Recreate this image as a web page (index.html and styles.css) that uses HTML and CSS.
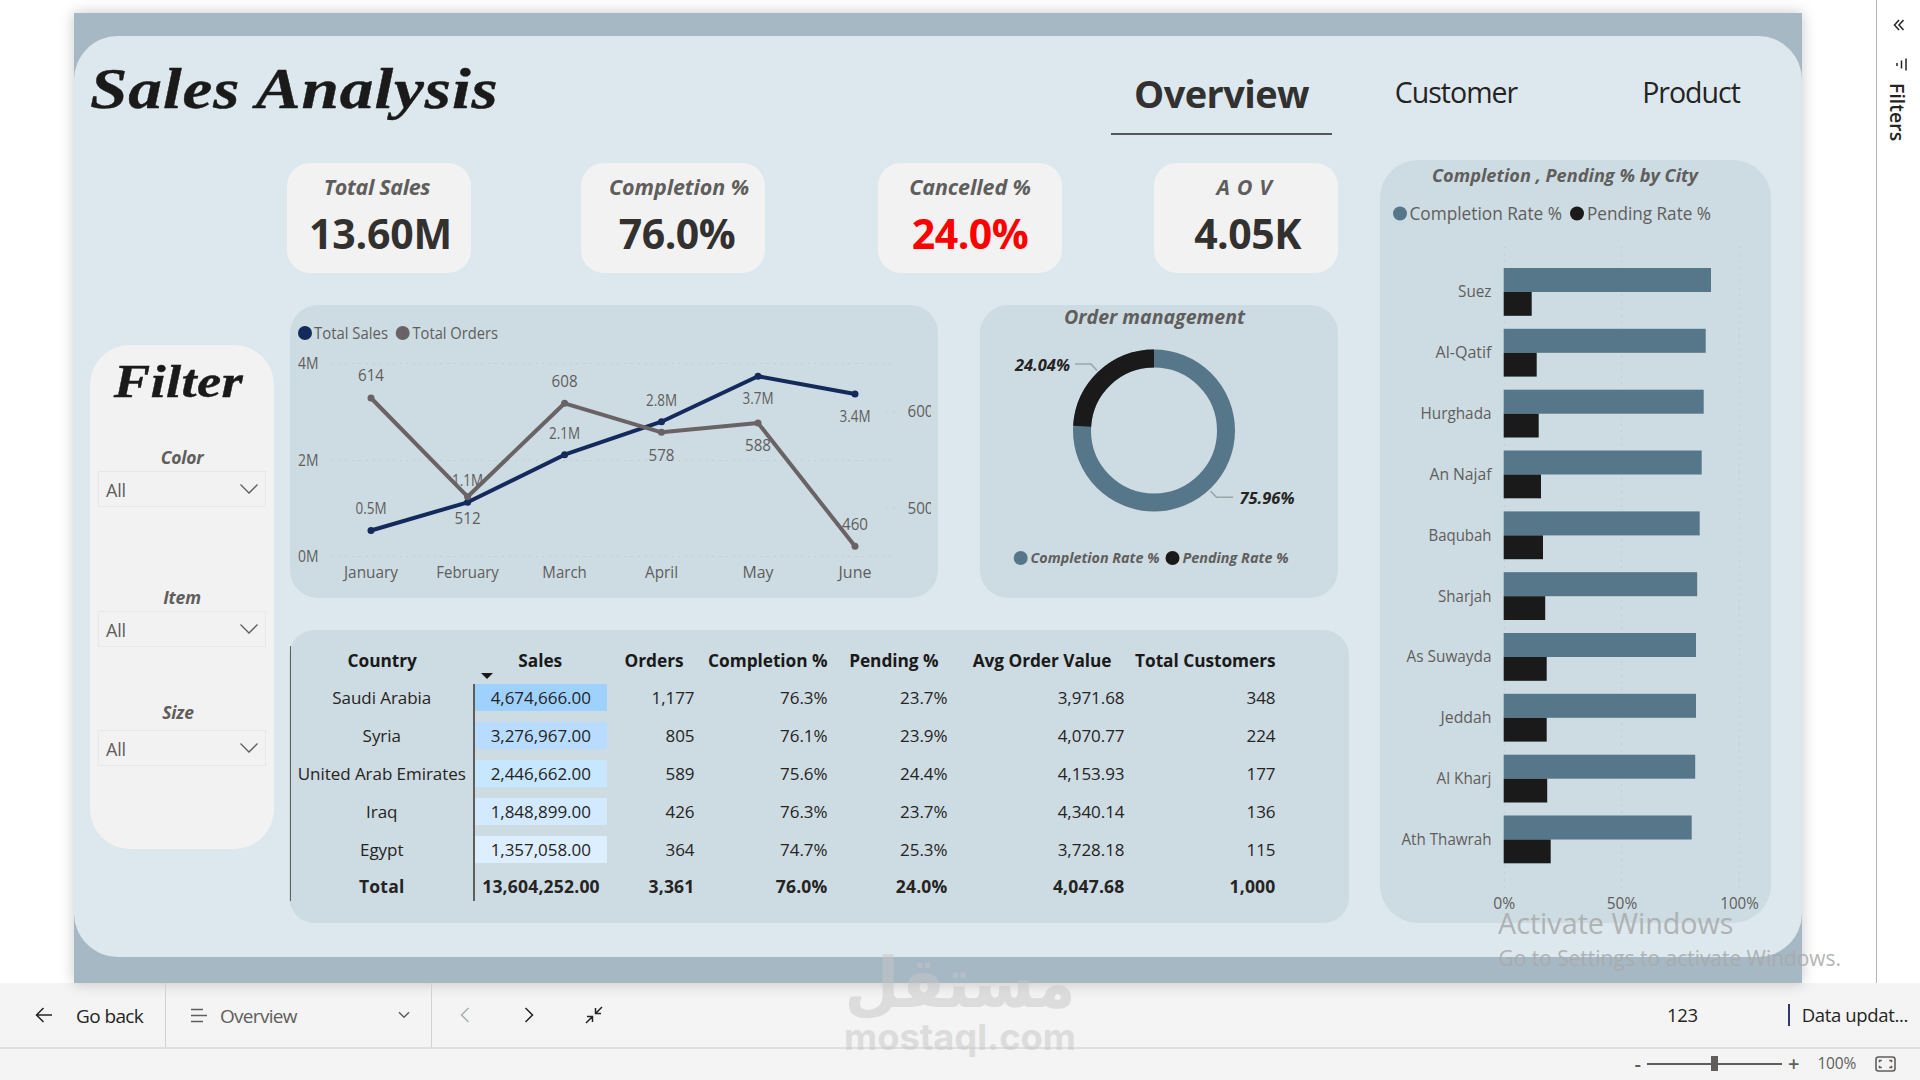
FILE: index.html
```html
<!DOCTYPE html>
<html lang="en">
<head>
<meta charset="utf-8">
<title>Sales Analysis</title>
<link rel="stylesheet" href="styles.css">
</head>
<body>
<div class="workspace">
  <main class="report">
    <div class="canvas">
      <header class="header">
        <h1 class="title">Sales Analysis</h1>
        <nav class="tabs">
          <a class="tab tab-active">Overview</a>
          <a class="tab tab-customer">Customer</a>
          <a class="tab tab-product">Product</a>
        </nav>
      </header>
      <div class="content">
        <aside class="filters">
          <h2 class="filters-title">Filter</h2>
          <div class="slicer slicer-color">
            <div class="slicer-label">Color</div>
            <div class="select"><span>All</span><svg width="20" height="12" viewBox="0 0 20 12"><path d="M1.5 1.5 10 10l8.500-8.500"/></svg></div>
          </div>
          <div class="slicer slicer-item">
            <div class="slicer-label">Item</div>
            <div class="select"><span>All</span><svg width="20" height="12" viewBox="0 0 20 12"><path d="M1.5 1.500 10 10l8.500-8.500"/></svg></div>
          </div>
          <div class="slicer slicer-size">
            <div class="slicer-label">Size</div>
            <div class="select"><span>All</span><svg width="20" height="12" viewBox="0 0 20 12"><path d="M1.500 1.500 10 10l8.500-8.500"/></svg></div>
          </div>
        </aside>

        <div class="middle">
          <section class="kpis">
            <div class="kpi kpi-sales"><div class="kpi-label">Total Sales</div><div class="kpi-value">13.60M</div></div>
            <div class="kpi kpi-completion"><div class="kpi-label">Completion %</div><div class="kpi-value">76.0%</div></div>
            <div class="kpi kpi-cancelled"><div class="kpi-label">Cancelled %</div><div class="kpi-value">24.0%</div></div>
            <div class="kpi kpi-aov"><div class="kpi-label">A O V</div><div class="kpi-value">4.05K</div></div>
          </section>

          <section class="charts">
            <div class="panel trend">
              <svg class="chart" width="648" height="293" viewBox="290 305 648 293">
                <circle cx="305" cy="333" r="7" fill="#152a5c"/>
                <text x="314" y="339" textLength="74" lengthAdjust="spacingAndGlyphs">Total Sales</text>
                <circle cx="402.700" cy="333" r="7" fill="#696366"/>
                <text x="412.500" y="339" textLength="85.500" lengthAdjust="spacingAndGlyphs">Total Orders</text>
                <g class="grid">
                  <path d="M332 363.500H896M332 460.500H896M332 556.500H896M886 412.500h9M886 508.500h9"/>
                </g>
                <text x="298" y="368.500" textLength="20.500" lengthAdjust="spacingAndGlyphs">4M</text>
                <text x="298" y="465.500" textLength="20.500" lengthAdjust="spacingAndGlyphs">2M</text>
                <text x="298" y="561.500" textLength="20.500" lengthAdjust="spacingAndGlyphs">0M</text>
                <svg x="900" y="395" width="31" height="140" viewBox="900 395 31 140">
                  <text x="907.500" y="417" textLength="26" lengthAdjust="spacingAndGlyphs">600</text>
                  <text x="907.500" y="514" textLength="26" lengthAdjust="spacingAndGlyphs">500</text>
                </svg>
                <g class="mid">
                  <text x="467.600" y="486" textLength="31" lengthAdjust="spacingAndGlyphs">1.1M</text>
                </g>
                <path class="line" stroke="#152a5c" d="M371 530.500 467.600 502.300 564.600 454.700 661.500 421.700 758 376.300 855 394"/>
                <g fill="#152a5c"><circle cx="371" cy="530.500" r="3.500"/><circle cx="467.600" cy="502.300" r="3.500"/><circle cx="564.600" cy="454.700" r="3.500"/><circle cx="661.500" cy="421.700" r="3.500"/><circle cx="758" cy="376.300" r="3.500"/><circle cx="855" cy="394" r="3.500"/></g>
                <path class="line" stroke="#696366" d="M371 398 467.600 496.700 564.600 403.300 661.500 432.300 758 423 855 546.300"/>
                <g fill="#696366"><circle cx="371" cy="398" r="3.500"/><circle cx="467.600" cy="496.700" r="3.500"/><circle cx="564.600" cy="403.300" r="3.500"/><circle cx="661.500" cy="432.300" r="3.500"/><circle cx="758" cy="423" r="3.500"/><circle cx="855" cy="546.300" r="3.500"/></g>
                <g class="mid">
                  <text x="371" y="381" textLength="26" lengthAdjust="spacingAndGlyphs">614</text>
                  <text x="371" y="514" textLength="31" lengthAdjust="spacingAndGlyphs">0.5M</text>
                  <text x="467.600" y="524" textLength="26" lengthAdjust="spacingAndGlyphs">512</text>
                  <text x="564.600" y="387" textLength="26" lengthAdjust="spacingAndGlyphs">608</text>
                  <text x="564.600" y="438.500" textLength="31" lengthAdjust="spacingAndGlyphs">2.1M</text>
                  <text x="661.500" y="405.500" textLength="31" lengthAdjust="spacingAndGlyphs">2.8M</text>
                  <text x="661.500" y="461" textLength="26" lengthAdjust="spacingAndGlyphs">578</text>
                  <text x="758" y="403.500" textLength="31" lengthAdjust="spacingAndGlyphs">3.7M</text>
                  <text x="758" y="451" textLength="26" lengthAdjust="spacingAndGlyphs">588</text>
                  <text x="855" y="421.500" textLength="31" lengthAdjust="spacingAndGlyphs">3.4M</text>
                  <text x="855" y="530" textLength="26" lengthAdjust="spacingAndGlyphs">460</text>
                  <text x="371" y="578" textLength="54" lengthAdjust="spacingAndGlyphs">January</text>
                  <text x="467.600" y="578" textLength="62.500" lengthAdjust="spacingAndGlyphs">February</text>
                  <text x="564.600" y="578" textLength="44.500" lengthAdjust="spacingAndGlyphs">March</text>
                  <text x="661.500" y="578" textLength="33" lengthAdjust="spacingAndGlyphs">April</text>
                  <text x="758" y="578" textLength="31" lengthAdjust="spacingAndGlyphs">May</text>
                  <text x="855" y="578" textLength="33" lengthAdjust="spacingAndGlyphs">June</text>
                </g>
              </svg>
            </div>
            <div class="panel donut">
              <svg class="chart strong" width="358" height="293" viewBox="980 305 358 293">
                <text class="panel-title" x="1064" y="324" textLength="181" lengthAdjust="spacingAndGlyphs">Order management</text>
                <circle cx="1154" cy="430.500" r="72" fill="none" stroke="#567789" stroke-width="18"/>
                <circle cx="1154" cy="430.500" r="72" fill="none" stroke="#1a1a1a" stroke-width="18" pathLength="100" stroke-dasharray="24.040 75.960" stroke-dashoffset="24.040" transform="rotate(-90 1154 430.500)"/>
                <path class="leader" d="M1075 364h16l6 6.500M1210.500 491l6 6.200H1233"/>
                <text class="dark" x="1015" y="371" textLength="55" lengthAdjust="spacingAndGlyphs">24.04%</text>
                <text class="dark" x="1239.500" y="504" textLength="55" lengthAdjust="spacingAndGlyphs">75.96%</text>
                <circle cx="1020.700" cy="558" r="7" fill="#567789"/>
                <text class="small" x="1030.500" y="563" textLength="129" lengthAdjust="spacingAndGlyphs">Completion Rate %</text>
                <circle cx="1172.500" cy="558" r="7" fill="#1a1a1a"/>
                <text class="small" x="1182.500" y="563" textLength="106" lengthAdjust="spacingAndGlyphs">Pending Rate %</text>
              </svg>
            </div>
          </section>

          <section class="panel matrix">
            <table>
              <colgroup><col class="c1"><col class="c2"><col class="c3"><col class="c4"><col class="c5"><col class="c6"><col class="c7"></colgroup>
              <thead><tr><th>Country</th><th><span class="sorted">Sales</span></th><th>Orders</th><th>Completion %</th><th>Pending %</th><th>Avg Order Value</th><th>Total Customers</th></tr></thead>
              <tbody>
                <tr><td>Saudi Arabia</td><td><span class="heat heat-1">4,674,666.00</span></td><td>1,177</td><td>76.3%</td><td>23.7%</td><td>3,971.68</td><td>348</td></tr>
                <tr><td>Syria</td><td><span class="heat heat-2">3,276,967.00</span></td><td>805</td><td>76.1%</td><td>23.9%</td><td>4,070.77</td><td>224</td></tr>
                <tr><td>United Arab Emirates</td><td><span class="heat heat-3">2,446,662.00</span></td><td>589</td><td>75.6%</td><td>24.4%</td><td>4,153.93</td><td>177</td></tr>
                <tr><td>Iraq</td><td><span class="heat heat-4">1,848,899.00</span></td><td>426</td><td>76.3%</td><td>23.7%</td><td>4,340.14</td><td>136</td></tr>
                <tr><td>Egypt</td><td><span class="heat heat-5">1,357,058.00</span></td><td>364</td><td>74.7%</td><td>25.3%</td><td>3,728.18</td><td>115</td></tr>
                <tr class="total"><td>Total</td><td>13,604,252.00</td><td>3,361</td><td>76.0%</td><td>24.0%</td><td>4,047.68</td><td>1,000</td></tr>
              </tbody>
            </table>
          </section>
        </div>

        <section class="panel city">
          <svg class="chart" width="391" height="763" viewBox="1380 160 391 763">
            <text class="panel-title city-title" x="1432" y="182" textLength="266" lengthAdjust="spacingAndGlyphs">Completion , Pending % by City</text>
            <circle cx="1400" cy="213.500" r="7" fill="#567789"/>
            <text class="legend" x="1409.500" y="219.500" textLength="152.500" lengthAdjust="spacingAndGlyphs">Completion Rate %</text>
            <circle cx="1577" cy="213.500" r="7" fill="#1a1a1a"/>
            <text class="legend" x="1587" y="219.500" textLength="124" lengthAdjust="spacingAndGlyphs">Pending Rate %</text>
            <g class="grid"><path d="M1504.500 247V889M1621.500 247V889M1739.500 247V889"/></g>
            <g fill="#567789">
              <rect x="1503.700" y="268" width="207.300" height="24"/>
              <rect x="1503.700" y="328.800" width="202" height="24"/>
              <rect x="1503.700" y="389.700" width="200" height="24"/>
              <rect x="1503.700" y="450.500" width="198" height="24"/>
              <rect x="1503.700" y="511.400" width="196" height="24"/>
              <rect x="1503.700" y="572.200" width="193.500" height="24"/>
              <rect x="1503.700" y="633" width="192.300" height="24"/>
              <rect x="1503.700" y="693.800" width="192.300" height="24"/>
              <rect x="1503.700" y="754.700" width="191.500" height="24"/>
              <rect x="1503.700" y="815.500" width="188" height="24"/>
            </g>
            <g fill="#1a1a1a">
              <rect x="1503.700" y="292" width="28" height="23.800"/>
              <rect x="1503.700" y="352.800" width="33" height="23.800"/>
              <rect x="1503.700" y="413.700" width="35" height="23.800"/>
              <rect x="1503.700" y="474.500" width="37.300" height="23.800"/>
              <rect x="1503.700" y="535.400" width="39.300" height="23.800"/>
              <rect x="1503.700" y="596.200" width="41.500" height="23.800"/>
              <rect x="1503.700" y="657" width="43" height="23.800"/>
              <rect x="1503.700" y="717.800" width="43" height="23.800"/>
              <rect x="1503.700" y="778.700" width="43.500" height="23.800"/>
              <rect x="1503.700" y="839.500" width="47" height="23.800"/>
            </g>
            <g class="end">
              <text x="1491.500" y="297" textLength="33.500" lengthAdjust="spacingAndGlyphs">Suez</text>
              <text x="1491.500" y="358" textLength="56" lengthAdjust="spacingAndGlyphs">Al-Qatif</text>
              <text x="1491.500" y="419" textLength="71" lengthAdjust="spacingAndGlyphs">Hurghada</text>
              <text x="1491.500" y="480" textLength="62" lengthAdjust="spacingAndGlyphs">An Najaf</text>
              <text x="1491.500" y="541" textLength="63" lengthAdjust="spacingAndGlyphs">Baqubah</text>
              <text x="1491.500" y="602" textLength="53.500" lengthAdjust="spacingAndGlyphs">Sharjah</text>
              <text x="1491.500" y="662" textLength="85" lengthAdjust="spacingAndGlyphs">As Suwayda</text>
              <text x="1491.500" y="723" textLength="51" lengthAdjust="spacingAndGlyphs">Jeddah</text>
              <text x="1491.500" y="784" textLength="55" lengthAdjust="spacingAndGlyphs">Al Kharj</text>
              <text x="1491.500" y="845" textLength="90" lengthAdjust="spacingAndGlyphs">Ath Thawrah</text>
            </g>
            <g class="mid">
              <text x="1504.300" y="909" textLength="22" lengthAdjust="spacingAndGlyphs">0%</text>
              <text x="1622" y="909" textLength="30.500" lengthAdjust="spacingAndGlyphs">50%</text>
              <text x="1739.500" y="909" textLength="38.500" lengthAdjust="spacingAndGlyphs">100%</text>
            </g>
          </svg>
        </section>
      </div>
    </div>
  </main>
  <aside class="pane">
    <svg width="12" height="12" viewBox="0 0 12 12"><path d="M6 1 1.500 6 6 11M10.500 1 6 6l4.500 5"/></svg>
    <svg class="pane-filter" width="12" height="13" viewBox="0 0 12 13"><path d="M11 .5v12M6.500 2.500v8M2 5v3"/></svg>
    <span class="pane-label">Filters</span>
  </aside>
</div>

<footer class="bar">
  <button class="back">
    <svg width="18" height="16" viewBox="0 0 18 16"><path d="M8.500 1 1.500 8l7 7M1.500 8H17"/></svg>
    <span>Go back</span>
  </button>
  <button class="pages">
    <svg width="18" height="15" viewBox="0 0 18 15"><path d="M1 1.500h12M1 7.500h16M1 13.500h12"/></svg>
    <span>Overview</span>
    <svg class="caret" width="12" height="8" viewBox="0 0 12 8"><path d="M1 1.200 6 6.200l5-5"/></svg>
  </button>
  <div class="pager">
    <svg class="off" width="10" height="16" viewBox="0 0 10 16"><path d="M8.500 1 1.500 8l7 7"/></svg>
    <svg width="10" height="16" viewBox="0 0 10 16"><path d="m1.500 1 7 7-7 7"/></svg>
    <svg class="shrink" width="18" height="18" viewBox="0 0 18 18"><path d="m17 1-6.500 6.500M10.500 2v5.500h5.500M1 17l6.500-6.500M7.500 16v-5.500h-5.500"/></svg>
  </div>
  <div class="meta"><span class="count">123</span><span class="updated">Data updat...</span></div>
</footer>
<footer class="zoom">
  <span class="step minus">-</span>
  <span class="track"><i class="thumb"></i></span>
  <span class="step plus">+</span>
  <span class="percent">100%</span>
  <svg width="21" height="16" viewBox="0 0 21 16"><rect x="1" y="1" width="19" height="14" rx="2.500"/><path d="M4.500 6.200V4.500h2.300M14.200 4.500h2.300v1.700M16.500 9.800v1.700h-2.300M6.800 11.500H4.500V9.800"/></svg>
</footer>

<svg class="activate" width="350" height="64" viewBox="1496 908 350 64">
  <text x="1498" y="933.500" font-size="29" textLength="235.500" lengthAdjust="spacingAndGlyphs">Activate Windows</text>
  <text x="1498.500" y="966" font-size="21" textLength="342.500" lengthAdjust="spacingAndGlyphs">Go to Settings to activate Windows.</text>
</svg>
<svg class="stamp" width="240" height="130" viewBox="840 935 240 130">
  <text class="stamp-ar" x="960" y="1007" text-anchor="middle" textLength="231" lengthAdjust="spacingAndGlyphs" font-size="70">مستقل</text>
  <text class="stamp-url" x="844" y="1049.500" textLength="232" lengthAdjust="spacingAndGlyphs" font-size="36">mostaql.com</text>
</svg>
</body>
</html>
```
FILE: styles.css
```css
* { box-sizing: border-box; }
body {
  margin: 0;
  width: 1920px;
  height: 1080px;
  overflow: hidden;
  background: #fff;
  color: #252423;
  font-family: "Open Sans", "Noto Sans", sans-serif;
  font-size: 17px;
}
h1, h2 { margin: 0; }
button { border: 0; background: none; font: inherit; color: inherit; padding: 0; }
svg { display: block; flex: none; }

.workspace { display: flex; justify-content: space-between; height: 983px; }
.report {
  width: 1728px;
  height: 970px;
  margin: 13px 0 0 74px;
  padding: 23px 0 26px;
  background: #a7b8c5;
  box-shadow: 0 0 14px rgba(0, 0, 0, .22);
}
.canvas { height: 921px; border-radius: 44px; background: #dde8ee; }

/* header */
.header { display: flex; justify-content: space-between; height: 124px; padding: 0 0 0 16px; }
.title, .filters-title {
  font-family: "Liberation Serif", serif;
  font-style: italic;
  font-weight: 700;
  color: #1a1a1a;
  -webkit-text-stroke: .4px #1a1a1a;
  white-space: nowrap;
}
.title { font-size: 58px; line-height: 70px; padding-top: 18px; letter-spacing: .8px; transform: scaleX(1.160); transform-origin: 0 0; }
.tabs { display: flex; align-items: flex-start; padding-right: 59px; }
.tab { line-height: 40px; white-space: nowrap; text-align: center; }
.tab-active {
  width: 221px;
  height: 80px;
  margin-top: 19px;
  padding-top: 7px;
  line-height: 62px;
  border-bottom: 2px solid #53585f;
  font-size: 38px;
  font-weight: 700;
  color: #323130;
  letter-spacing: -.6px;
}
.tab-customer, .tab-product { padding-top: 36px; font-size: 28.500px; letter-spacing: -1px; }
.tab-customer { width: 126px; margin-left: 61px; }
.tab-product { width: 104px; margin-left: 120px; }

.content { display: flex; align-items: flex-start; padding-left: 16px; }

/* slicers */
.filters { width: 184px; height: 504px; margin-top: 185px; border-radius: 40px; background: #f2f2f2; padding: 0 8px; }
.filters-title { font-size: 47px; line-height: 54px; padding-top: 9px; text-align: center; letter-spacing: .3px; transform: scaleX(1.160) translateX(-3px); }
.slicer-label {
  height: 22px;
  margin-bottom: 3px;
  line-height: 22px;
  text-align: center;
  font-size: 17.500px;
  font-style: italic;
  font-weight: 700;
  color: #605e5c;
  letter-spacing: -.2px;
}
.slicer-color { margin-top: 37.500px; }
.slicer-item { margin-top: 79px; }
.slicer-size { margin-top: 54px; }
.slicer-size .slicer-label { margin-bottom: 7px; padding-right: 8px; }
.select {
  display: flex;
  align-items: center;
  justify-content: space-between;
  height: 36px;
  padding: 0 6px 0 7px;
  border: 1px solid #e8e8e8;
  color: #605e5c;
  font-size: 18px;
}
.select span { padding-top: 3px; letter-spacing: -.2px; }
.select svg { fill: none; stroke: #605e5c; stroke-width: 1.300; }

/* kpi cards */
.middle { width: 1060px; margin-left: 15px; padding-top: 3px; }
.kpis { display: flex; padding-right: 11px; margin-left: -2px; }
.kpi { width: 184px; height: 110px; border-radius: 23px; background: #f2f2f2; text-align: center; white-space: nowrap; }
.kpi-completion { margin-left: 110px; padding-left: 12px; }
.kpi-completion .kpi-value { padding-right: 4px; }
.kpi-cancelled { margin-left: 113px; }
.kpi-aov { margin-left: 92px; }
.kpi-label { padding-top: 8px; line-height: 31px; font-size: 21.500px; font-weight: 700; font-style: italic; color: #605e5c; letter-spacing: -.1px; }
.kpi-sales .kpi-label { letter-spacing: -.35px; padding-right: 4px; }
.kpi-aov .kpi-label { letter-spacing: .6px; padding-right: 3px; }
.kpi-value { padding-top: 1px; line-height: 60px; font-size: 41px; font-weight: 700; color: #323130; letter-spacing: -.5px; }
.kpi-cancelled .kpi-value { color: #f00; }
.kpi-sales .kpi-value { padding-left: 3px; letter-spacing: -.2px; }
.kpi-aov .kpi-value { padding-left: 3px; }

/* panels */
.panel { background: #cddbe2; }
.charts { display: flex; gap: 42px; margin-top: 32px; }
.trend, .donut { height: 293px; border-radius: 28px; }
.trend { width: 648px; margin-left: 1px; }
.donut { width: 358px; }
.city { width: 391px; height: 763px; margin-left: 31px; border-radius: 38px; }
.chart text { font-size: 15.500px; fill: #605e5c; }
.chart .panel-title { font-size: 19px; font-weight: 700; font-style: italic; }
.chart .city-title { font-size: 18px; }
.chart .legend { font-size: 17.500px; }
.strong text { font-weight: 700; font-style: italic; }
.chart .small { font-size: 14px; }
.chart .dark { font-size: 15.500px; fill: #252423; }
.mid text { text-anchor: middle; }
.end text { text-anchor: end; }
.grid path { fill: none; stroke: #bfc8c4; stroke-width: 1; stroke-dasharray: 1.300 5.500; }
.line { fill: none; stroke-width: 4; stroke-linejoin: round; }
.leader { fill: none; stroke: #98a5a9; stroke-width: 1.500; }

/* matrix */
.matrix { height: 293px; margin-top: 32px; padding: 16px 0 0 1px; border-radius: 26px; }
table { width: 991px; border-collapse: collapse; table-layout: fixed; border-left: 1.500px solid #605e5c; letter-spacing: -.05px; }
.c1 { width: 183px; } .c2 { width: 134px; } .c3 { width: 93px; } .c4 { width: 133px; } .c5 { width: 120px; } .c6 { width: 177px; } .c7 { width: 151px; }
th, td { height: 38px; padding: 0 6px 0 0; text-align: right; font-size: 17px; line-height: 27px; vertical-align: top; white-space: nowrap; color: #252423; }
th { font-weight: 700; font-size: 17.300px; color: #1a1a1a; padding-top: 1px; }
thead th { letter-spacing: -.05px; }
td:first-child, th:first-child, td:nth-child(2), th:nth-child(2) { text-align: center; padding-right: 0; padding-left: 0; }
td:first-child { border-right: 2px solid #605e5c; }
th:nth-child(3) { padding-right: 17px; }
th:nth-child(5) { padding-right: 15px; }
th:nth-child(6) { padding-right: 19px; }
.sorted { display: block; position: relative; }
.sorted::after { content: ""; position: absolute; left: 7px; top: 26px; border: 6px solid transparent; border-top: 6.500px solid #1a1a1a; border-bottom: 0; }
.heat { display: block; height: 27px; }
.heat-1 { background: #9fd1ff; }
.heat-2 { background: #b7dcff; }
.heat-3 { background: #c7e6ff; }
.heat-4 { background: #d3e9ff; }
.heat-5 { background: #ddeeff; }
.total td { font-weight: 700; font-size: 17.500px; letter-spacing: .2px; height: 27px; line-height: 25px; }

/* collapsed filter pane */
.pane { display: flex; flex-direction: column; align-items: center; width: 44px; padding-top: 19px; border-left: 1.500px solid #b5b5b5; }
.pane svg { fill: none; stroke: #252423; stroke-width: 1.500; }
.pane .pane-filter { margin: 27px 0 0 5px; }
.pane-label { margin: 12px 4px 0 0; writing-mode: vertical-rl; font-size: 19.500px; font-weight: 600; line-height: 26px; }

/* bottom bars */
.bar { display: flex; height: 66px; background: #f4f4f4; border-bottom: 2px solid #dedede; font-size: 19px; line-height: 64px; white-space: nowrap; }
.bar svg { fill: none; stroke: #252423; stroke-width: 1.500; }
.back { display: flex; align-items: center; gap: 23px; width: 166px; padding-left: 35px; border-right: 1px solid #ccd3d2; letter-spacing: -.6px; }
.back span, .pages span { padding-top: 2px; }
.pages { display: flex; align-items: center; width: 266px; padding: 0 21px 0 24px; border-right: 1px solid #ccd3d2; color: #605e5c; letter-spacing: -.7px; }
.pages span { margin-left: 12px; }
.pages svg { stroke: #605e5c; }
.pages .caret { margin-left: auto; }
.pager { display: flex; align-items: center; padding-left: 28px; gap: 54px; }
.pager .off { stroke: #a9b2a9; }
.pager .shrink { margin-left: -3px; }
.meta { display: flex; align-items: center; margin-left: auto; padding-right: 12px; font-size: 18.500px; letter-spacing: -.35px; }
.updated { margin-left: 90px; padding-left: 12px; border-left: 2px solid #2d3b66; line-height: 22px; }
.zoom { display: flex; align-items: center; justify-content: flex-end; height: 31px; padding: 0 24px 2px 0; background: #f4f4f4; color: #605e5c; font-size: 15.500px; line-height: 29px; }
.step { font-size: 20px; font-weight: 600; }
.track { display: flex; justify-content: center; align-items: center; width: 135px; height: 2px; margin: 0 6px; background: #605e5c; }
.thumb { width: 7px; height: 15px; background: #605e5c; }
.percent { margin: 0 19px 0 18px; letter-spacing: -.2px; }
.zoom svg { fill: none; stroke: #605e5c; stroke-width: 1.600; }

/* overlays */
.activate { position: absolute; left: 1496px; top: 908px; fill: #a9aaaa; opacity: .85; }
.stamp { position: absolute; left: 840px; top: 935px; fill: #c6c6c6; opacity: .5; font-family: "DejaVu Sans", sans-serif; font-weight: 700; overflow: visible; }
.stamp-url { font-family: Inter, sans-serif; }
```
